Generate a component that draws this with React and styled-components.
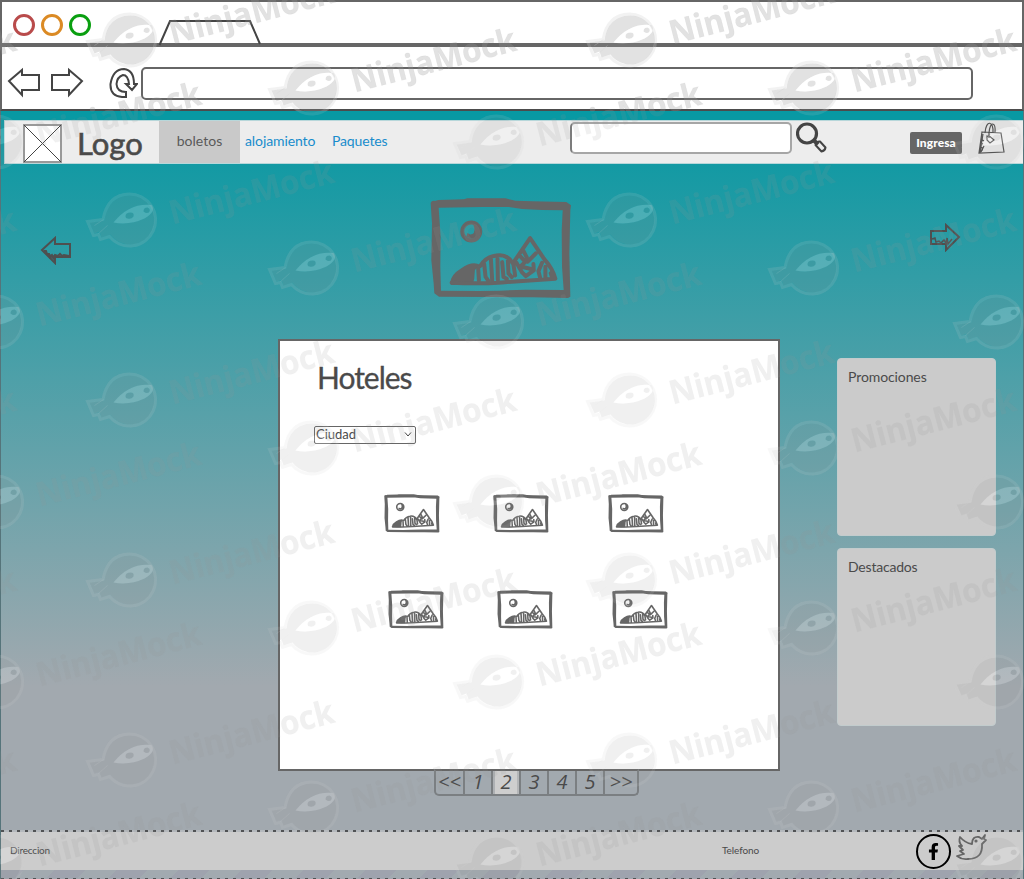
import React from "react";
import styled, { createGlobalStyle, css } from "styled-components";
import { FaFacebookF } from "react-icons/fa";

const ink = "#4a4a4a";
const line = "#666";

const GlobalStyle = createGlobalStyle`
  * { box-sizing: border-box; }
  body { margin: 0; }
`;

const Screen = styled.div`
  position: relative;
  width: 1024px;
  height: 879px;
  overflow: hidden;
  display: flex;
  flex-direction: column;
  font-family: Lato, "Open Sans", sans-serif;
  color: ${ink};
`;

/* Browser frame */
const Chrome = styled.header`
  height: 111px;
  flex: none;
  background: #fff;
  border: 2px solid ${line};
  border-bottom: 2px solid #4c4c4c;
  display: flex;
  flex-direction: column;
`;
const TabBar = styled.div`
  height: 45px;
  border-bottom: 4px solid ${line};
  display: flex;
  align-items: flex-start;
  padding: 12px 0 0 11px;
  gap: 6px;
`;
const Dot = styled.span`
  width: 22px;
  height: 22px;
  border-radius: 50%;
  border: 3px solid ${(p) => p.$color};
`;
const TabShape = styled.svg`
  margin: 5px 0 0 61px;
  flex: none;
`;
const AddressRow = styled.div`
  display: flex;
  padding: 19px 0 0 5px;
`;
const NavIcon = styled.svg`
  flex: none;
  margin-right: ${(p) => p.$gap || 0}px;
`;
const AddressBox = styled.div`
  width: 832px;
  height: 33px;
  margin-top: 1px;
  border: 2px solid ${line};
  border-radius: 5px;
`;

/* Page */
const Page = styled.div`
  flex: 1;
  display: flex;
  flex-direction: column;
  border-left: 1px solid #55747a;
  border-right: 1px solid #55747a;
  background: linear-gradient(#0799a3 0, #0d99a3 30px, #a2a9af 575px);
`;
const NavBar = styled.nav`
  margin: 9px 0 0 3px;
  height: 44px;
  display: flex;
  align-items: flex-start;
  background: #ededed;
  border: 1px solid #b7d7da;
  border-right: 0;
  padding-left: 18px;
`;
const LogoBox = styled.svg`
  margin-top: 3px;
  flex: none;
`;
const text = css`
  font-size: ${(p) => p.$size || 14}px;
  letter-spacing: ${(p) => p.$track || 0}px;
  line-height: 1;
  white-space: nowrap;
`;
const Brand = styled.div`
  ${text}
  width: 97px;
  padding: 7px 0 0 15px;
  -webkit-text-stroke: 0.6px ${ink};
`;
const NavItem = styled.a`
  ${text}
  height: 42px;
  padding-top: 13px;
  width: ${(p) => p.$width}px;
  text-align: ${(p) => (p.$active ? "center" : "left")};
  padding-left: ${(p) => (p.$active ? 0 : 5)}px;
  background: ${(p) => (p.$active ? "#c9c9c9" : "transparent")};
  color: ${(p) => (p.$active ? "#5a5a5a" : "#188ccc")};
`;
const SearchField = styled.div`
  width: 222px;
  height: 32px;
  margin: 1px 4px 0 164px;
  background: #fff;
  border: 2px solid #a6a6a6;
  border-left-color: #7c7c7c;
  border-radius: 5px;
`;
const LoginButton = styled.button`
  ${text}
  width: 52px;
  height: 22px;
  margin: 11px 16px 0 83px;
  padding: 0;
  border: 0;
  border-radius: 2px;
  background: #666;
  color: #fff;
  font-family: inherit;
  font-weight: 900;
`;

const Hero = styled.section`
  height: 175px;
  display: flex;
  align-items: flex-start;
  justify-content: space-between;
  padding: 34px 62px 0 39px;
`;
const HeroArrow = styled.svg`
  margin-top: ${(p) => p.$top}px;
`;
const SketchSvg = styled.svg`
  display: block;
  flex: none;
`;

const Main = styled.main`
  display: flex;
  align-items: flex-start;
  padding-left: 277px;
`;
const Panel = styled.section`
  width: 502px;
  height: 432px;
  background: #fff;
  border: 2px solid ${line};
`;
const Title = styled.h1`
  ${text}
  margin: 21px 0 0 37px;
  font-weight: 400;
  -webkit-text-stroke: 0.3px ${ink};
`;
const Select = styled.div`
  ${text}
  width: 102px;
  height: 18px;
  margin: 34px 0 0 34px;
  padding: 0 3px 2px 1px;
  border: 1px solid #666;
  border-radius: 2px;
  display: flex;
  align-items: center;
  justify-content: space-between;
`;
const PictureRow = styled.div`
  display: flex;
  margin: ${(p) => p.$top}px 0 0 ${(p) => p.$left}px;
  & > :nth-child(1) { margin-right: 53px; }
  & > :nth-child(2) { margin-right: 59px; }
`;
const Aside = styled.aside`
  display: flex;
  flex-direction: column;
  gap: 12px;
  margin: 19px 0 0 57px;
`;
const Card = styled.div`
  ${text}
  width: 159px;
  height: 178px;
  padding: 11px 0 0 10px;
  background: #cbcbcb;
  border: 1px solid #c2cccd;
  border-radius: 4px;
`;
const Pager = styled.div`
  width: 205px;
  height: 27px;
  margin: -2px 0 0 433px;
  display: flex;
  border: 2px solid #7b7f82;
  border-top-color: ${line};
  border-radius: 0 0 5px 5px;
`;
const PageCell = styled.div`
  ${text}
  width: ${(p) => p.$width}px;
  display: flex;
  align-items: center;
  justify-content: center;
  font-family: "Open Sans", sans-serif;
  font-style: italic;
  padding-bottom: 1px;
  border-left: ${(p) => (p.$first ? 0 : 2)}px solid #7b7f82;
  background: ${(p) => (p.$active ? "#cecece" : "transparent")};
  box-shadow: ${(p) => (p.$active ? "inset 2px 0 #aeb1b4, inset -2px 0 #b4b6b8" : "none")};
`;

const Footer = styled.footer`
  height: 49px;
  margin-top: auto;
  background: repeating-linear-gradient(90deg, #505254 0 3px, #b4b8bc 3px 8px) 0 0 / 100% 2px no-repeat,
    repeating-linear-gradient(90deg, #505254 0 3px, #a2a8b0 3px 8px) 0 100% / 100% 1px no-repeat,
    linear-gradient(#ccc, #ccc) 0 0 / 100% 40px no-repeat,
    repeating-linear-gradient(135deg, #a2aab0 0 22px, #9fa3ae 22px 44px);
  display: flex;
  align-items: flex-start;
`;
const FootText = styled.span`
  ${text}
  width: ${(p) => p.$width}px;
  padding: 15px 0 0 9px;
`;
const Facebook = styled.span`
  width: 35px;
  height: 35px;
  margin: 4px 4px 0 0;
  border: 2px solid #000;
  border-radius: 50%;
  color: #000;
  display: flex;
  align-items: center;
  justify-content: center;
`;
const Bird = styled.svg`
  margin-top: 3px;
`;

const Overlay = styled.svg`
  position: absolute;
  left: 0;
  top: 0;
  pointer-events: none;
`;

function LandscapeSketch({ width, height, color = line }) {
  return (
    <SketchSvg width={width} height={height} viewBox="93 83 427 304" preserveAspectRatio="none">
      <path
        fill={color}
        fillRule="evenodd"
        d="M95 98 Q98 90 108 92 L118 89 L195 87 L205 84 L320 84 L350 91 L400 93 L503 95 L517 105 L515 120 L512 250 L515 380 L508 384 L400 382 L280 381 L120 380 L106 370 L104 340 L97 270 L99 160 Z M119 112 L125 200 L124 290 L126 362 L240 363 L300 362 L380 359 L495 360 L490 290 L489 180 L492 120 L430 119 L370 116 L330 110 L250 110 Z"
      />
      <circle cx="217" cy="184" r="27" fill="none" stroke={color} strokeWidth="12" />
      <path fill={color} d="M222 160 Q243 160 245 184 Q240 206 217 206 L202 200 L206 188 L214 193 Q230 192 226 172 Z" />
      <path fill={color} d="M153 337 Q158 312 185 296 Q222 270 244 285 L228 300 L226 326 L222 342 L157 345 Z" />
      <path
        fill="none"
        stroke={color}
        strokeWidth="12"
        strokeLinejoin="round"
        strokeLinecap="round"
        d="M158 338 Q240 342 310 337 T470 326 Q462 295 436 266 L394 204 L342 280 Q325 250 292 256 Q260 260 244 288 M238 296 L240 330 M256 282 L260 320 L268 332 M276 265 L280 330 M296 266 L297 329 M310 276 L314 321 L324 326 M327 264 L329 310 L339 321 M344 284 L349 316 M353 278 L370 307 L381 318 L405 301 L404 282 M364 258 L380 275 L365 289 L394 296 M374 242 L384 262 L386 275 L411 250 M430 278 L419 303 L424 322 M440 290 L440 322 M456 309 L461 325"
      />
    </SketchSvg>
  );
}

const visor = "M-16 3 Q0 -17 22 -14.500 Q27 -8 15 -1 Q0 6 -16 3 Z";
const eyes = "M-4 -3 Q-4 -7 1 -7 Q5 -7 4 -3 Q2 0 -2 -1 Q-4 -1 -4 -3 Z M14 -8 Q14 -12 18 -12 Q21 -11 20 -8 Q18 -5 14 -8 Z";

function Ninja({ x, y }) {
  return (
    <g transform={`translate(${x} ${y})`}>
      <path
        fill="#969696"
        fillOpacity=".28"
        fillRule="evenodd"
        d={`M-40 3 L-25 1 Q-22 -23 0 -24 A24.500 24.500 0 1 1 -19 15 L-28 18 L-30 12 L-35 14 Z ${visor} ${eyes}`}
      />
      <path fill="#fff" fillOpacity=".38" fillRule="evenodd" d={`${visor} ${eyes}`} />
      <path
        fill="none"
        stroke="#d0d0d0"
        strokeWidth="3"
        strokeOpacity=".28"
        d="M-42 2 L-26.500 0 Q-22 -25 0 -25.500 A26 26 0 1 1 -20 17 L-29 20 L-31 15 L-36 16 Z"
      />
      <path fill="none" stroke="#d0d0d0" strokeOpacity=".28" d="M-26 0 L-35 6 M-22 6 L-31 14" />
      <text
        transform="translate(43 5) rotate(-14.500)"
        fontFamily="Open Sans"
        fontWeight="700"
        fontSize="33"
        fill="#969696"
        fillOpacity=".28"
        stroke="#969696"
        strokeOpacity=".1"
        strokeWidth=".6"
        textLength="169"
        lengthAdjust="spacingAndGlyphs"
      >
        NinjaMock
      </text>
    </g>
  );
}

function Watermark() {
  const marks = [];
  for (let row = -1; row < 5; row++) {
    for (let col = -1; col < 3; col++) {
      [[129.5, 39.5], [311.5, 87.5], [496.5, 141.5]].forEach(([x, y]) => {
        const px = x + col * 500;
        const py = y + row * 180;
        if (px > -205 && px < 1060 && py > -25 && py < 900) marks.push([px, py]);
      });
    }
  }
  return (
    <Overlay width="1024" height="879" aria-hidden="true">
      <mask id="strength" maskUnits="userSpaceOnUse" x="0" y="0" width="1024" height="879">
        <rect width="1024" height="111" fill="#fff" />
        <rect y="111" width="1024" height="768" fill="#fff" fillOpacity=".5" />
      </mask>
      <g mask="url(#strength)">
        {marks.map(([x, y]) => (
          <Ninja key={`${x}-${y}`} x={x} y={y} />
        ))}
      </g>
    </Overlay>
  );
}

const cells = [["<<", 27], ["1", 28], ["2", 28], ["3", 28], ["4", 28], ["5", 28], [">>", 34]];

export default function App() {
  return (
    <Screen>
      <GlobalStyle />
      <Chrome>
        <TabBar>
          <Dot $color="#b94b4b" />
          <Dot $color="#db8a24" />
          <Dot $color="#0a9f10" />
          <TabShape width="104" height="27" viewBox="0 0 104 27" fill="none" stroke="#444" strokeWidth="2">
            <path d="M1.500 26 L12 2 H92 L102 25" />
          </TabShape>
        </TabBar>
        <AddressRow>
          <NavIcon $gap={9} width="34" height="32" viewBox="0 0 34 32" fill="none" stroke="#444" strokeWidth="2">
            <path d="M2 15 L15 4 V9 H32 V24 H15 V29 Z" />
          </NavIcon>
          <NavIcon $gap={24} width="34" height="32" viewBox="0 0 34 32" fill="none" stroke="#444" strokeWidth="2">
            <path d="M2 9 H19 V4 L32 15 L19 29 V24 H2 Z" />
          </NavIcon>
          <NavIcon $gap={3} width="30" height="34" viewBox="0 0 30 34" fill="none" stroke="#444" strokeWidth="2">
            <path d="M18 26 V31 H14 Q2 30 2.500 18 Q5 3 16 3 Q26 4 26 18 H29 L24 24 L18 18 H21 Q20 9 15 9 Q9 11 8.500 18 Q9 26 18 26 Z" />
          </NavIcon>
          <AddressBox />
        </AddressRow>
      </Chrome>

      <Page>
        <NavBar>
          <LogoBox width="39" height="39" viewBox="0 0 39 39">
            <rect x="1" y="1" width="37" height="37" fill="#fff" stroke="#999" strokeWidth="2" />
            <path d="M1 1 L38 38 M38 1 L1 38" stroke="#444" />
          </LogoBox>
          <Brand $size={31}>Logo</Brand>
          <NavItem $active $width={81} $size={14}>boletos</NavItem>
          <NavItem $width={87} $size={14} $track={-0.1}>alojamiento</NavItem>
          <NavItem $width={79} $size={14} $track={-0.15}>Paquetes</NavItem>
          <SearchField />
          <SketchSvg width="31" height="33" viewBox="0 0 31 33" fill="none" stroke="#444">
            <circle cx="11" cy="12.500" r="9.500" strokeWidth="3.200" />
            <path d="M17.500 19 L22 23.500" strokeWidth="4" />
            <path d="M19.500 24 Q21 20 24 20.500 L29.500 26.500 Q29 30 25.500 30.500 Z" strokeWidth="2" strokeLinejoin="round" />
          </SketchSvg>
          <LoginButton $size={12} $track={0.1}>Ingresa</LoginButton>
          <SketchSvg width="28" height="34" viewBox="0 0 28 34" fill="none" stroke="#4b4b4b" strokeWidth="1.200">
            <path d="M4 11 L23 12 L26 31 L1 32 Z M2 32 L5 13 M3 18 L6 20 M3 22 L5 23 M2 26 L5 27 M3 31 L6 25 M2 29 L5 29" />
            <path d="M7 12 C8 -2 16 0 15 12 M11 12 C12 -1 18 1 17 12" />
            <path d="M9 15 L12 15.500 L16 19 L12 22 L9 19 Z M11 11 L11 17" />
          </SketchSvg>
        </NavBar>

        <Hero>
          <HeroArrow $top={38} width="32" height="29" viewBox="0 0 32 29" fill="none" stroke="#4f4f4f" strokeWidth="2">
            <path d="M2 14 L15 2 V8 H30 V21 H15 V27 Z" />
            <path d="M4 15 L6 15 L7 18 L9 18 L10 21 L12 19 L14 22 L15 19 L18 20 L20 18 L22 20 L24 19 L29 20" />
            <path d="M6 17 L15 25 V20 Z" fill="#4f4f4f" stroke="none" />
          </HeroArrow>
          <LandscapeSketch width={142} height={101} />
          <HeroArrow $top={25} width="32" height="29" viewBox="0 0 32 29" fill="none" stroke="#4f4f4f" strokeWidth="2">
            <path d="M2 8 H17 V2 L30 14 L17 27 V21 H2 Z" />
            <path d="M3 16 L6 15 L7 19 L10 18 L12 20 L15 17 L17 20 L18 15 L19 21 L23 16" strokeWidth="1.500" />
          </HeroArrow>
        </Hero>

        <Main>
          <Panel>
            <Title $size={30} $track={-1}>Hoteles</Title>
            <Select $size={13}>
              Ciudad
              <svg width="8" height="6" viewBox="0 0 8 6" fill="none" stroke="#444">
                <path d="M1 1.500 L4 5 L7 1.500" />
              </svg>
            </Select>
            <PictureRow $top={50} $left={104}>
              {[0, 1, 2].map((i) => <LandscapeSketch key={i} width={56} height={39} />)}
            </PictureRow>
            <PictureRow $top={57} $left={108}>
              {[0, 1, 2].map((i) => <LandscapeSketch key={i} width={56} height={39} />)}
            </PictureRow>
          </Panel>
          <Aside>
            <Card $size={14} $track={-0.1}>Promociones</Card>
            <Card $size={14} $track={-0.2}>Destacados</Card>
          </Aside>
        </Main>
        <Pager>
          {cells.map(([label, width], i) => (
            <PageCell key={label} $size={20} $width={width} $first={i === 0} $active={label === "2"}>{label}</PageCell>
          ))}
        </Pager>

        <Footer>
          <FootText $size={10} $track={-0.2} $width={712}>Direccion</FootText>
          <FootText $size={10} $track={-0.1} $width={203}>Telefono</FootText>
          <Facebook><FaFacebookF size={17} /></Facebook>
          <Bird width="33" height="30" viewBox="0 0 33 30" fill="none" stroke="#666" strokeWidth="1.800" strokeLinejoin="round">
            <path d="M5 4 Q10 10 17 11 Q17 3 24 4 L27 6 L30 2 L29 6 L31 7 L27 11 Q28 26 13 26 Q7 27 2 23 L9 21 L5 18 L8 17 L4 13 L7 13 Q3 9 5 4 Z" />
            <circle cx="21" cy="8" r=".7" />
          </Bird>
        </Footer>
      </Page>
      <Watermark />
    </Screen>
  );
}
